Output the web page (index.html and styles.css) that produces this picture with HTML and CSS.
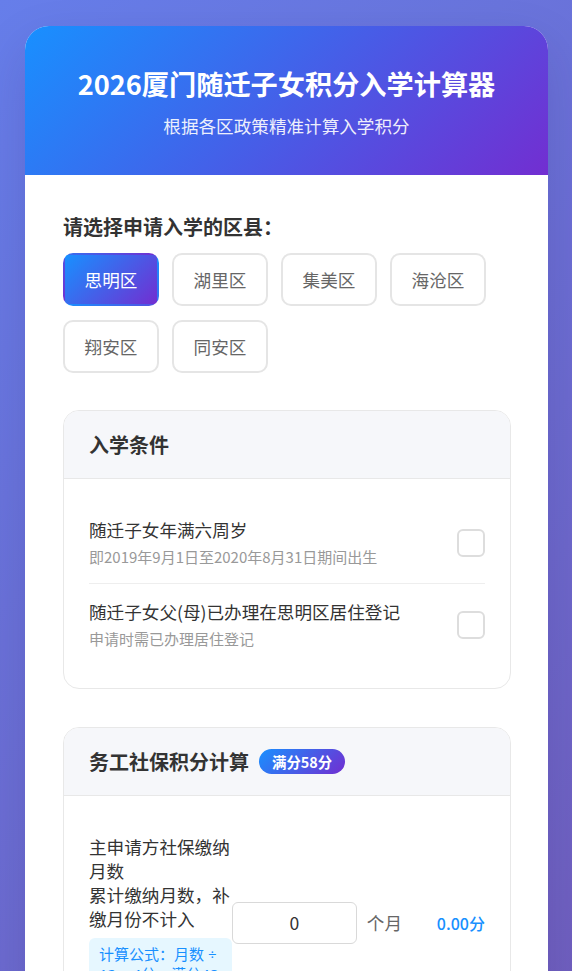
FILE: index.html
```html
<!DOCTYPE html>
<html lang="zh-CN">
<head>
<meta charset="UTF-8">
<meta name="viewport" content="width=device-width, initial-scale=1.0">
<title>2026厦门随迁子女积分入学计算器</title>
<link rel="stylesheet" href="styles.css">
</head>
<body>
<div class="container">
  <header class="header">
    <h1 class="title">2026厦门随迁子女积分入学计算器</h1>
    <p class="subtitle">根据各区政策精准计算入学积分</p>
  </header>
  <main class="content">
    <div class="section-label">请选择申请入学的区县：</div>
    <div class="districts">
      <button class="district active">思明区</button>
      <button class="district">湖里区</button>
      <button class="district">集美区</button>
      <button class="district">海沧区</button>
      <button class="district">翔安区</button>
      <button class="district">同安区</button>
    </div>

    <section class="card">
      <div class="card-header"><h2 class="card-title">入学条件</h2></div>
      <div class="card-body">
        <div class="cond-item">
          <div class="cond-text">
            <div class="cond-title">随迁子女年满六周岁</div>
            <div class="cond-sub">即2019年9月1日至2020年8月31日期间出生</div>
          </div>
          <span class="checkbox"></span>
        </div>
        <div class="cond-item">
          <div class="cond-text">
            <div class="cond-title">随迁子女父(母)已办理在思明区居住登记</div>
            <div class="cond-sub">申请时需已办理居住登记</div>
          </div>
          <span class="checkbox"></span>
        </div>
      </div>
    </section>

    <section class="card">
      <div class="card-header"><h2 class="card-title">务工社保积分计算</h2><span class="badge">满分58分</span></div>
      <div class="card-body">
        <div class="score-row">
          <div class="score-label">
            <div class="score-name">主申请方社保缴纳月数</div>
            <div class="score-desc">累计缴纳月数，补缴月份不计入</div>
            <div class="formula">计算公式：月数 ÷ 12 × 4分，满分48分</div>
          </div>
          <input class="num-input" type="text" value="0">
          <span class="unit">个月</span>
          <span class="score">0.00分</span>
        </div>
      </div>
    </section>
  </main>
</div>
</body>
</html>
```

FILE: styles.css
```css
html {
  background: linear-gradient(135deg, #667eea 0%, #764ba2 100%);
  background-size: 100% 2000px;
  background-repeat: no-repeat;
  background-color: #6e62b5;
}

body {
  margin: 0;
  padding: 26px 24px 40px 25px;
  font-family: "Noto Sans CJK SC", "Noto Sans", sans-serif;
  color: #333;
}

.container {
  background: #fff;
  border-radius: 24px;
  overflow: hidden;
  box-shadow: 0 20px 50px rgba(40, 30, 100, 0.15);
}

.header {
  background: linear-gradient(135deg, #1890ff 0%, #722ed1 100%);
  color: #fff;
  text-align: center;
  padding: 39px 20px 37px;
}

.title {
  margin: 0;
  font-size: 27.2px;
  line-height: 36px;
  font-weight: 700;
}

.subtitle {
  margin: 12px 0 0;
  font-size: 17.6px;
  line-height: 25px;
  opacity: 0.9;
}

.content {
  padding: 38px 37px 40px 38px;
}

.section-label {
  font-size: 20px;
  line-height: 28px;
  font-weight: 700;
  color: #333;
  margin-bottom: 12px;
}

.districts {
  display: flex;
  flex-wrap: wrap;
  column-gap: 13px;
  row-gap: 14px;
}

.district {
  width: 96px;
  height: 53px;
  border: 2px solid #e5e5e5;
  border-radius: 10px;
  background: #fff;
  color: #666;
  font-family: inherit;
  font-size: 17.6px;
  padding: 0;
}

.district.active {
  background: linear-gradient(135deg, #1890ff 0%, #722ed1 100%);
  border-color: transparent;
  color: #fff;
}

.card {
  margin-top: 37px;
  border: 1px solid #e8e8e8;
  border-radius: 16px;
  overflow: hidden;
}

.card + .card {
  margin-top: 38px;
}

.card-header {
  display: flex;
  align-items: center;
  background: #f6f7fa;
  border-bottom: 1px solid #e8e8e8;
  padding: 0 25px;
  height: 67px;
}

.card-title {
  margin: 0;
  font-size: 20px;
  line-height: 28px;
  font-weight: 700;
  color: #333;
}

.badge {
  margin-left: 10px;
  background: linear-gradient(135deg, #1890ff 0%, #722ed1 100%);
  color: #fff;
  font-size: 14.4px;
  font-weight: 700;
  line-height: 17px;
  padding: 4px 13px;
  border-radius: 20px;
}

.card-body {
  padding: 23px 25px;
}

.cond-item {
  display: flex;
  align-items: center;
  justify-content: space-between;
  padding: 16px 0;
  border-bottom: 1px solid #eee;
}

.cond-item:last-child {
  border-bottom: none;
}

.cond-title {
  font-size: 17.6px;
  line-height: 24px;
  color: #333;
}

.cond-sub {
  margin-top: 5px;
  font-size: 15px;
  line-height: 20px;
  color: #999;
}

.checkbox {
  flex: 0 0 auto;
  width: 24px;
  height: 24px;
  border: 2px solid #ddd;
  border-radius: 6px;
  background: #fff;
}

.score-row {
  display: flex;
  align-items: center;
  padding: 16px 0;
}

.score-label {
  flex: 1 1 auto;
  min-width: 0;
}

.score-name,
.score-desc {
  font-size: 17.6px;
  line-height: 24px;
  color: #333;
}

.formula {
  margin-top: 7px;
  background: #e6f7ff;
  color: #1890ff;
  font-family: "Noto Sans", "Noto Sans CJK SC", sans-serif;
  font-size: 15px;
  line-height: 20px;
  padding: 6px 8px 6px 10px;
  border-radius: 6px;
}

.num-input {
  flex: 0 0 125px;
  box-sizing: border-box;
  width: 125px;
  height: 42px;
  border: 1px solid #d9d9d9;
  border-radius: 6px;
  font-family: inherit;
  font-size: 17.6px;
  text-align: center;
  color: #333;
  outline: none;
}

.unit {
  margin-left: 10px;
  font-size: 17.6px;
  color: #666;
  white-space: nowrap;
}

.score {
  flex: 0 0 83px;
  text-align: right;
  font-size: 16px;
  font-weight: 500;
  color: #1890ff;
  white-space: nowrap;
}
```
